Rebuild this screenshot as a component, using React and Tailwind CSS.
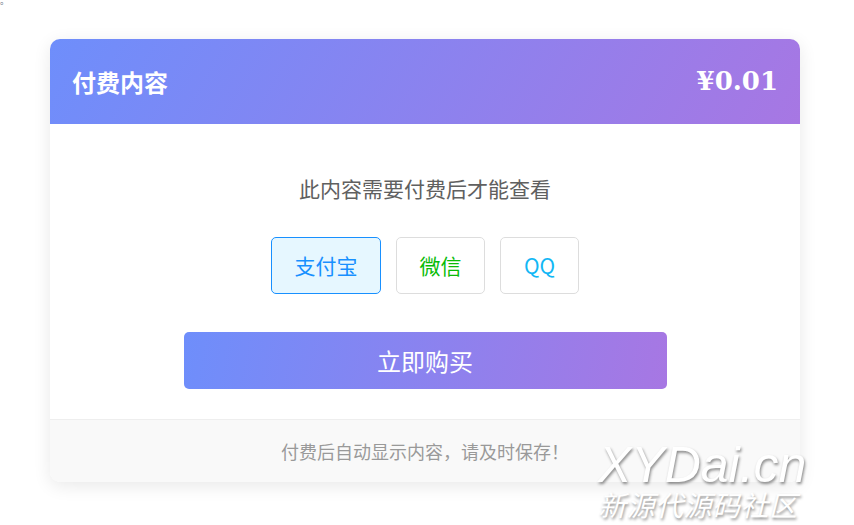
export default function App() {
  const cjk = { fontFamily: '"Noto Sans CJK SC", "Noto Sans", sans-serif' };

  return (
    <div className="relative w-[854px] h-[525px] bg-white overflow-hidden font-['Noto_Sans_CJK_SC',sans-serif]">
      <span className="absolute left-0 top-[-6px] text-[9px] text-gray-500">。</span>

      <div className="pt-[39px] pl-[50px]">
        <div className="w-[750px] rounded-[10px] overflow-hidden bg-white shadow-[0_4px_18px_rgba(0,0,0,0.09)]">
          <div className="h-[85px] px-[22px] flex items-center justify-between bg-[linear-gradient(120deg,#6e8efb,#a777e3)]">
            <h2 className="text-[24px] font-bold text-white">付费内容</h2>
            <span className="text-[26px] font-bold text-white font-['DejaVu_Serif',serif]">
              ¥0.01
            </span>
          </div>

          <div className="pt-[50px] pb-[30px] flex flex-col items-center">
            <p className="text-[21px] leading-[28px] text-[#606060]">此内容需要付费后才能查看</p>

            <div className="mt-[35px] flex items-center gap-[15px]">
              <button className="w-[110px] h-[57px] rounded-[5px] border border-[#1890ff] bg-[#e6f7ff] text-[21px] text-[#1890ff]">
                支付宝
              </button>
              <button className="w-[89px] h-[57px] rounded-[5px] border border-[#ddd] bg-white text-[21px] text-[#09bb07]">
                微信
              </button>
              <button className="w-[79px] h-[57px] rounded-[5px] border border-[#ddd] bg-white text-[21px] text-[#12b7f5]">
                QQ
              </button>
            </div>

            <button className="mt-[38px] w-[483px] h-[57px] rounded-[5px] text-white text-[24px] bg-[linear-gradient(100deg,#6e8efb,#a777e3)]">
              立即购买
            </button>
          </div>

          <div className="h-[63px] border-t border-[#eee] bg-[#f9f9f9] flex items-center justify-center">
            <p className="text-[18px] text-[#999]">付费后自动显示内容，请及时保存！</p>
          </div>
        </div>
      </div>

      <div className="absolute left-[598px] top-[441px] text-white italic select-none [text-shadow:1px_2px_3px_rgba(0,0,0,0.45)]">
        <div className="text-[50px] leading-[48px] font-['Liberation_Sans',sans-serif]">XYDai.cn</div>
        <div className="text-[28px] leading-[30px] tracking-[0.5px]" style={cjk}>新源代源码社区</div>
      </div>
    </div>
  );
}
